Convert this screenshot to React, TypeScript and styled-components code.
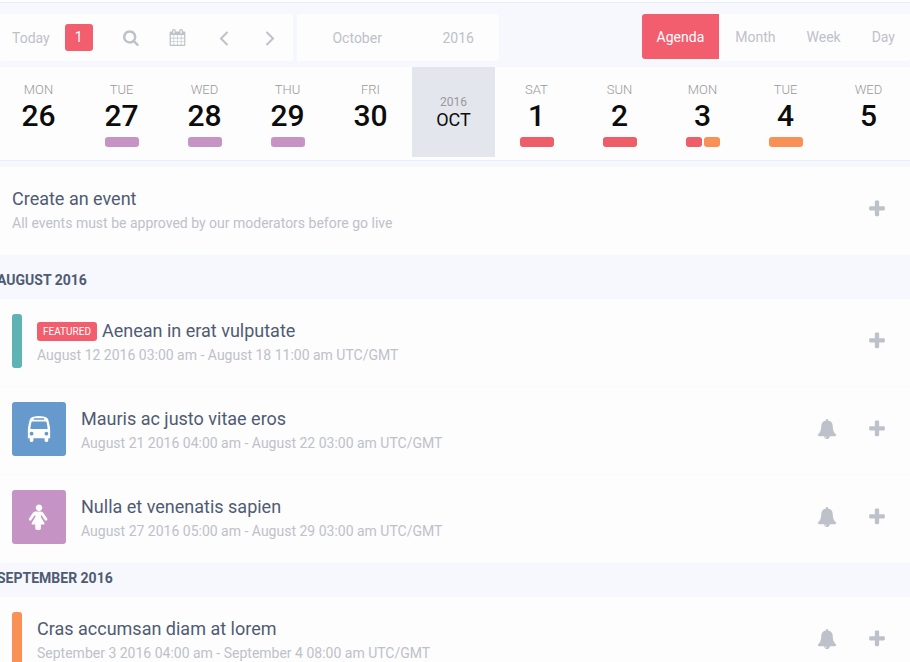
import React from "react";
import styled, { createGlobalStyle } from "styled-components";

const GlobalStyle = createGlobalStyle`
  * { box-sizing: border-box; }
  body {
    margin: 0;
    background: #f6f8fd;
    font-family: Roboto, "Liberation Sans", sans-serif;
    font-size: 14px;
    color: #bdc1c9;
  }
  button, select { font: inherit; color: inherit; border: 0; background: none; cursor: pointer; }
  h2, h3, p, ul { margin: 0; padding: 0; }
`;

const COLORS = {
  red: "#f25e6e",
  coral: "#ed5e68",
  orange: "#f99157",
  purple: "#c594c5",
  blue: "#6699cc",
  teal: "#5fb3b3",
};

const PATHS = {
  search:
    "M1152 832q0-185-131.5-316.5t-316.5-131.5-316.5 131.5-131.5 316.5 131.5 316.5 316.5 131.5 316.5-131.5 131.5-316.5zm512 832q0 52-38 90t-90 38q-54 0-90-38l-343-342q-179 124-399 124-143 0-273.5-55.5t-225-150-150-225-55.5-273.5 55.5-273.5 150-225 225-150 273.5-55.5 273.5 55.5 225 150 150 225 55.5 273.5q0 220-124 399l343 343q37 37 37 90z",
  calendar:
    "M192 1664h288v-288h-288v288zm352 0h320v-288h-320v288zm-352-352h288v-320h-288v320zm352 0h320v-320h-320v320zm-352-384h288v-288h-288v288zm736 736h320v-288h-320v288zm-384-736h320v-288h-320v288zm768 736h288v-288h-288v288zm-384-352h320v-320h-320v320zm-352-864v-288q0-13-9.5-22.5t-22.5-9.5h-64q-13 0-22.5 9.5t-9.5 22.5v288q0 13 9.5 22.5t22.5 9.5h64q13 0 22.5-9.5t9.5-22.5zm736 864h288v-320h-288v320zm-384-384h320v-288h-320v288zm384 0h288v-288h-288v288zm32-480v-288q0-13-9.5-22.5t-22.5-9.5h-64q-13 0-22.5 9.5t-9.5 22.5v288q0 13 9.5 22.5t22.5 9.5h64q13 0 22.5-9.5t9.5-22.5zm384-64v1280q0 52-38 90t-90 38h-1408q-52 0-90-38t-38-90v-1280q0-52 38-90t90-38h128v-96q0-66 47-113t113-47h64q66 0 113 47t47 113v96h384v-96q0-66 47-113t113-47h64q66 0 113 47t47 113v96h128q52 0 90 38t38 90z",
  plus:
    "M1600 736v192q0 40-28 68t-68 28h-416v416q0 40-28 68t-68 28h-192q-40 0-68-28t-28-68v-416h-416q-40 0-68-28t-28-68v-192q0-40 28-68t68-28h416v-416q0-40 28-68t68-28h192q40 0 68 28t28 68v416h416q40 0 68 28t28 68z",
  bell:
    "M912 1696q0-16-16-16-59 0-101.5-42.5t-42.5-101.5q0-16-16-16t-16 16q0 73 51.5 124.5t124.5 51.5q16 0 16-16zm816-288q0 52-38 90t-90 38h-448q0 106-75 181t-181 75-181-75-75-181h-448q-52 0-90-38t-38-90q50-42 91-88t85-119.5 74.5-158.5 50-206 19.5-260q0-152 117-282.5t307-158.5q-8-19-8-39 0-40 28-68t68-28 68 28 28 68q0 20-8 39 190 28 307 158.5t117 282.5q0 139 19.5 260t50 206 74.5 158.5 85 119.5 91 88z",
  female:
    "M1472 1056q0 40-28 68t-68 28q-51 0-80-43l-227-341h-45v132l247 411q9 15 9 33 0 26-19 45t-45 19h-192v272q0 46-33 79t-79 33h-160q-46 0-79-33t-33-79v-272h-192q-26 0-45-19t-19-45q0-18 9-33l247-411v-132h-45l-227 341q-29 43-80 43-40 0-68-28t-28-68q0-29 16-53l256-384q73-107 176-107h384q103 0 176 107l256 384q16 24 16 53zm-352-800q0 93-65.5 158.5t-158.5 65.5-158.5-65.5-65.5-158.5 65.5-158.5 158.5-65.5 158.5 65.5 65.5 158.5z",
  bus:
    "M512 1216q0-53-37.5-90.5t-90.5-37.5-90.5 37.5-37.5 90.5 37.5 90.5 90.5 37.5 90.5-37.5 37.5-90.5zm1024 0q0-53-37.5-90.5t-90.5-37.5-90.5 37.5-37.5 90.5 37.5 90.5 90.5 37.5 90.5-37.5 37.5-90.5zm-46-396l-72-384q-5-23-22.5-37.5t-40.5-14.5h-918q-23 0-40.5 14.5t-22.5 37.5l-72 384q-5 30 14 53t49 23h1062q30 0 49-23t14-53zm-226-612q0-20-14-34t-34-14h-640q-20 0-34 14t-14 34 14 34 34 14h640q20 0 34-14t14-34zm400 725v603h-128v128q0 53-37.5 90.5t-90.5 37.5-90.5-37.5-37.5-90.5v-128h-768v128q0 53-37.5 90.5t-90.5 37.5-90.5-37.5-37.5-90.5v-128h-128v-603q0-112 25-223l103-454q9-78 97.5-137t230-89 312.5-30 312.5 30 230 89 97.5 137l105 454q23 102 23 223z",
};

type IconName = keyof typeof PATHS;

const Icon = ({ name, size }: { name: IconName; size: number }) => (
  <svg width={size} height={size} viewBox="0 0 1792 1792" fill="currentColor" aria-hidden="true">
    <path d={PATHS[name]} />
  </svg>
);

const Chevron = ({ d }: { d: string }) => (
  <svg width="18" height="18" viewBox="0 0 18 18" fill="none" stroke="currentColor" strokeWidth="2" aria-hidden="true">
    <path d={d} />
  </svg>
);

const Page = styled.main`
  height: 100vh;
  overflow: hidden;
  border-top: 2px solid #fdfdfd;
`;

const Toolbar = styled.header`
  display: flex;
  align-items: flex-start;
  gap: 4px;
  padding: 11px 0 6px;
  border-top: 1px solid #e9effa;
`;

const Panel = styled.div`
  display: flex;
  height: 47px;
  background: #fdfdfd;
  border-radius: 3px;
`;

const TodayButton = styled.button`
  display: flex;
  align-items: center;
  gap: 15px;
  padding: 0 16px 0 12px;
`;

const DayBadge = styled.span`
  width: 28px;
  border-radius: 3px;
  background: ${COLORS.red};
  color: #fff;
  line-height: 27px;
  text-align: center;
`;

const ToolButton = styled.button`
  display: flex;
  align-items: center;
  justify-content: center;
  width: 46px;
  padding: 0;
`;

const DateSelect = styled.select`
  appearance: none;
  width: 101px;
  padding: 0 0 0 20px;
  text-align: center;
  text-align-last: center;
`;

const ViewPanel = styled(Panel)`
  align-items: flex-start;
  gap: 1px;
  margin-left: auto;
`;

const ViewButton = styled.button<{ $active?: boolean }>`
  height: 45px;
  padding: 0 15px;
  border-radius: ${(p) => (p.$active ? "3px 0 0 3px" : "0")};
  ${(p) => p.$active && `background: ${COLORS.red}; color: #fff;`}
`;

const Strip = styled.nav`
  display: grid;
  grid-template-columns: repeat(11, 1fr);
  margin-left: -3px;
  padding-bottom: 3px;
  background: #fdfdfd;
  border-bottom: 1px solid #e9effa;
`;

const DayCell = styled.button`
  display: flex;
  flex-direction: column;
  align-items: center;
  height: 90px;
  padding: 14px 0 0;
`;

const Weekday = styled.span`
  color: #999;
  font-size: 13px;
  line-height: 18px;
  font-weight: 300;
`;

const DayNumber = styled.span`
  color: #0c0c0c;
  font-size: 30px;
  line-height: 34px;
  font-weight: 500;
`;

const Marks = styled.span`
  display: flex;
  gap: 2px;
  width: 34px;
  height: 10px;
  margin-top: 4px;
`;

const Mark = styled.i<{ $color: string }>`
  flex: 1;
  border-radius: 3px;
  background: ${(p) => p.$color};
`;

const MonthCell = styled.div`
  display: flex;
  flex-direction: column;
  align-items: center;
  justify-content: center;
  background: #e4e6ed;
`;

const MonthYear = styled.span`
  color: #999;
  font-size: 12px;
  line-height: 16px;
`;

const MonthName = styled.span`
  color: #0c0c0c;
  font-size: 18px;
  line-height: 20px;
`;

const CreateSection = styled.section`
  margin-top: 6px;
`;

const GroupTitle = styled.h2<{ $first?: boolean }>`
  margin-left: -3px;
  padding: ${(p) => (p.$first ? "10px" : "0")} 0 4px;
  color: #4f5b73;
  font-size: 14px;
  line-height: 30px;
  font-weight: 700;
`;

const EventList = styled.ul`
  list-style: none;
`;

const Row = styled.div`
  display: flex;
  gap: 15px;
  height: 88px;
  padding: 15px 8px 18px 12px;
  background: #fdfdfd;
  border-bottom: 1px solid #f8fcfc;
`;

const Bar = styled.span<{ $color: string }>`
  width: 10px;
  border-radius: 3px;
  background: ${(p) => p.$color};
`;

const Tile = styled.span<{ $color: string }>`
  display: flex;
  align-items: center;
  justify-content: center;
  width: 54px;
  border-radius: 3px;
  background: ${(p) => p.$color};
  color: #fff;
`;

const RowText = styled.div`
  flex: 1;
  padding-top: 4px;
`;

const RowTitle = styled.h3`
  display: flex;
  align-items: center;
  gap: 5px;
  color: #4f5b73;
  font-size: 18px;
  line-height: 26px;
  font-weight: 400;
`;

const Featured = styled.span`
  padding: 0 6px;
  border-radius: 3px;
  background: ${COLORS.red};
  color: #fff;
  font-size: 10px;
  line-height: 19px;
`;

const RowNote = styled.p`
  line-height: 22px;
`;

const Actions = styled.div`
  display: flex;
`;

const ActionButton = styled.button`
  display: flex;
  align-items: center;
  justify-content: center;
  width: 50px;
  padding: 0;
`;

type Day = { weekday: string; day: number; marks?: string[] };

const LAST_MONTH: Day[] = [
  { weekday: "MON", day: 26 },
  { weekday: "TUE", day: 27, marks: [COLORS.purple] },
  { weekday: "WED", day: 28, marks: [COLORS.purple] },
  { weekday: "THU", day: 29, marks: [COLORS.purple] },
  { weekday: "FRI", day: 30 },
];

const THIS_MONTH: Day[] = [
  { weekday: "SAT", day: 1, marks: [COLORS.coral] },
  { weekday: "SUN", day: 2, marks: [COLORS.coral] },
  { weekday: "MON", day: 3, marks: [COLORS.coral, COLORS.orange] },
  { weekday: "TUE", day: 4, marks: [COLORS.orange] },
  { weekday: "WED", day: 5 },
];

type EventItem = {
  title: string;
  when: string;
  color: string;
  icon?: IconName;
  featured?: boolean;
  bell?: boolean;
};

const GROUPS: { title: string; events: EventItem[] }[] = [
  {
    title: "AUGUST 2016",
    events: [
      { title: "Aenean in erat vulputate", when: "August 12 2016 03:00 am - August 18 11:00 am UTC/GMT", color: COLORS.teal, featured: true },
      { title: "Mauris ac justo vitae eros", when: "August 21 2016 04:00 am - August 22 03:00 am UTC/GMT", color: COLORS.blue, icon: "bus", bell: true },
      { title: "Nulla et venenatis sapien", when: "August 27 2016 05:00 am - August 29 03:00 am UTC/GMT", color: COLORS.purple, icon: "female", bell: true },
    ],
  },
  {
    title: "SEPTEMBER 2016",
    events: [
      { title: "Cras accumsan diam at lorem", when: "September 3 2016 04:00 am - September 4 08:00 am UTC/GMT", color: COLORS.orange, bell: true },
    ],
  },
];

const renderDay = ({ weekday, day, marks }: Day) => (
  <DayCell key={day}>
    <Weekday>{weekday}</Weekday>
    <DayNumber>{day}</DayNumber>
    {marks && (
      <Marks>
        {marks.map((color) => (
          <Mark key={color} $color={color} />
        ))}
      </Marks>
    )}
  </DayCell>
);

const EventRow = ({ event }: { event: EventItem }) => (
  <Row as="li">
    {event.icon ? (
      <Tile $color={event.color}>
        <Icon name={event.icon} size={26} />
      </Tile>
    ) : (
      <Bar $color={event.color} />
    )}
    <RowText>
      <RowTitle>
        {event.featured && <Featured>FEATURED</Featured>}
        {event.title}
      </RowTitle>
      <RowNote>{event.when}</RowNote>
    </RowText>
    <Actions>
      {event.bell && (
        <ActionButton aria-label="Remind me">
          <Icon name="bell" size={20} />
        </ActionButton>
      )}
      <ActionButton aria-label="Add to calendar">
        <Icon name="plus" size={20} />
      </ActionButton>
    </Actions>
  </Row>
);

export default function App() {
  return (
    <>
      <GlobalStyle />
      <Page>
        <Toolbar>
          <Panel>
            <TodayButton>
              Today <DayBadge>1</DayBadge>
            </TodayButton>
            <ToolButton aria-label="Search">
              <Icon name="search" size={17} />
            </ToolButton>
            <ToolButton aria-label="Calendar">
              <Icon name="calendar" size={17} />
            </ToolButton>
            <ToolButton aria-label="Previous">
              <Chevron d="M12.5 3 6 9.5 12.5 16" />
            </ToolButton>
            <ToolButton aria-label="Next">
              <Chevron d="M5.5 3 12 9.5 5.5 16" />
            </ToolButton>
          </Panel>
          <Panel>
            <DateSelect aria-label="Month" defaultValue="October">
              <option>September</option>
              <option>October</option>
              <option>November</option>
            </DateSelect>
            <DateSelect aria-label="Year" defaultValue="2016">
              <option>2015</option>
              <option>2016</option>
              <option>2017</option>
            </DateSelect>
          </Panel>
          <ViewPanel>
            <ViewButton $active>Agenda</ViewButton>
            <ViewButton>Month</ViewButton>
            <ViewButton>Week</ViewButton>
            <ViewButton>Day</ViewButton>
          </ViewPanel>
        </Toolbar>
        <Strip aria-label="Days">
          {LAST_MONTH.map(renderDay)}
          <MonthCell>
            <MonthYear>2016</MonthYear>
            <MonthName>OCT</MonthName>
          </MonthCell>
          {THIS_MONTH.map(renderDay)}
        </Strip>
        <CreateSection>
          <Row>
            <RowText>
              <RowTitle>Create an event</RowTitle>
              <RowNote>All events must be approved by our moderators before go live</RowNote>
            </RowText>
            <Actions>
              <ActionButton aria-label="Create an event">
                <Icon name="plus" size={20} />
              </ActionButton>
            </Actions>
          </Row>
        </CreateSection>
        {GROUPS.map((group, index) => (
          <section key={group.title}>
            <GroupTitle $first={index === 0}>{group.title}</GroupTitle>
            <EventList>
              {group.events.map((event) => (
                <EventRow key={event.title} event={event} />
              ))}
            </EventList>
          </section>
        ))}
      </Page>
    </>
  );
}
